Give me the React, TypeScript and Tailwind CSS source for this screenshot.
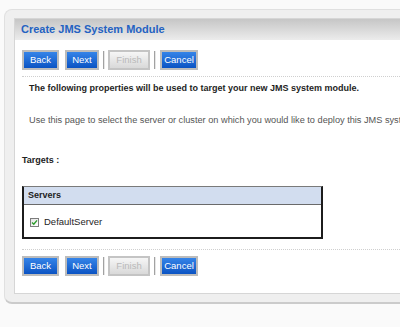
const font = "font-['Liberation_Sans',Arial,sans-serif]";

function Btn({ label, w, disabled }: { label: string; w: string; disabled?: boolean }) {
  return (
    <div
      className={`${w} h-[20px] shrink-0 flex items-center justify-center border-2 text-[9.5px] leading-none ${
        disabled
          ? "border-[#c4c4c4] bg-linear-to-b from-[#f6f6f6] to-[#d9d9d9] text-[#b9b9b9]"
          : "border-[#bcbcbc] bg-linear-to-b from-[#3584e8] to-[#0a53c3] text-white"
      }`}
    >
      {label}
    </div>
  );
}

function Sep() {
  return <div className="w-[2px] h-[18px] shrink-0 bg-[#a2a2a2] border-r border-[#e6e6e6]" />;
}

function ButtonRow() {
  return (
    <div className="flex items-center h-[20px] pl-[7px]">
      <Btn label="Back" w="w-[37px]" />
      <div className="w-[6px]" />
      <Btn label="Next" w="w-[34px]" />
      <div className="w-[4px]" />
      <Sep />
      <div className="w-[3px]" />
      <Btn label="Finish" w="w-[42px]" disabled />
      <div className="w-[4px]" />
      <Sep />
      <div className="w-[4px]" />
      <Btn label="Cancel" w="w-[38px]" />
    </div>
  );
}

export default function App() {
  return (
    <div className={`w-[400px] h-[327px] overflow-hidden bg-[#fafafa] ${font}`}>
      <div className="ml-[4px] mt-[9px] w-[430px] h-[295px] rounded-[8px] border border-[#e0e0e0] border-b-2 border-b-[#cbcbcb] bg-[#efefef] pt-[8px] pl-[9px]">
        <div className="h-[276px] border border-[#d6d6d6] bg-white">
          <div className="h-[21px] flex items-center pl-[6px] bg-linear-to-b from-[#c6c6c6] to-[#ececec]">
            <span className="text-[11px] font-bold text-[#2462c2] leading-none">Create JMS System Module</span>
          </div>

          <div className="mt-[10px]">
            <ButtonRow />
          </div>

          <div className="mt-[6px] ml-[7px] border-t border-dotted border-[#cfcfcf]" />

          <div className="mt-[5px] pl-[14px] h-[12px] leading-[12px] text-[9px] font-bold text-[#1e1e1e] whitespace-nowrap">
            The following properties will be used to target your new JMS system module.
          </div>

          <div className="mt-[20px] pl-[14px] h-[12px] leading-[12px] text-[9.2px] text-[#555] whitespace-nowrap">
            Use this page to select the server or cluster on which you would like to deploy this JMS system module.
          </div>

          <div className="mt-[28px] pl-[7px] h-[12px] leading-[12px] text-[9px] font-bold text-[#222]">
            Targets :
          </div>

          <div className="mt-[20px] ml-[7px] w-[301px] h-[53px] border-2 border-t border-[#1c1c1c] border-t-[#7a7a7a]">
            <div className="h-[18px] flex items-center pl-[4px] bg-[#d2ddef] border-b border-[#6a6a6a] text-[9px] font-bold text-[#222]">
              Servers
            </div>
            <div className="h-[32px] flex items-center pl-[6px] pt-[3px] gap-[5px]">
              <div className="w-[9px] h-[9px] border border-[#7c7c7c] bg-linear-to-br from-[#e4e4e4] to-white flex items-center justify-center">
                <svg width="7" height="7" viewBox="0 0 7 7">
                  <path d="M1 3.6 L2.8 5.3 L6 1.4" fill="none" stroke="#2b9c2b" strokeWidth="1.4" />
                </svg>
              </div>
              <span className="text-[9.5px] text-[#1e1e1e]">DefaultServer</span>
            </div>
          </div>

          <div className="mt-[10px] ml-[7px] border-t border-dotted border-[#cfcfcf]" />

          <div className="mt-[6px]">
            <ButtonRow />
          </div>
        </div>
      </div>
    </div>
  );
}
